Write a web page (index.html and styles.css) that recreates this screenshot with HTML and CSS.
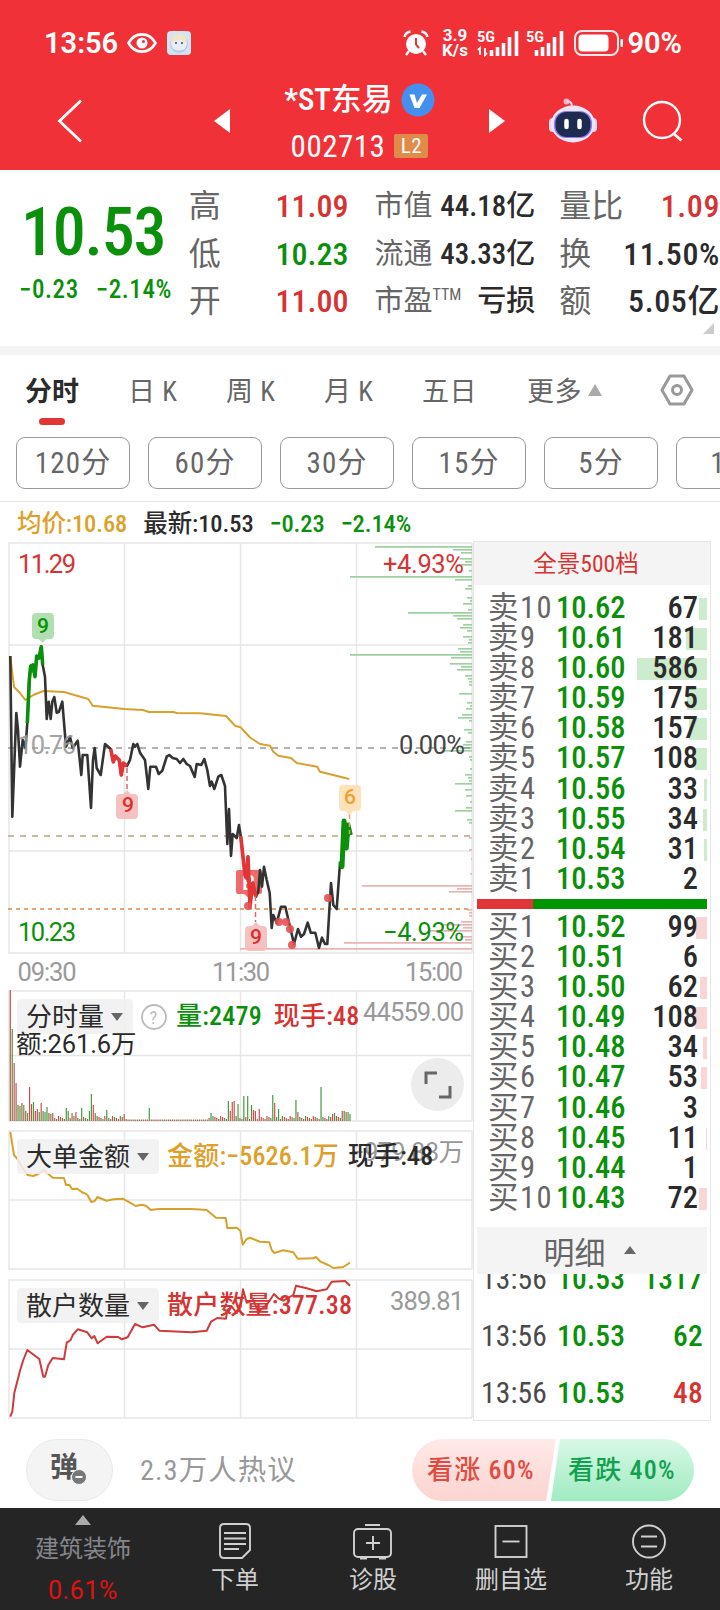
FILE: index.html
```html
<!DOCTYPE html>
<html lang="zh-CN">
<head>
  <meta charset="UTF-8" />
  <meta name="viewport" content="width=device-width, initial-scale=1.0"/>
  <title>*ST东易 002713</title>
  <link rel="stylesheet" href="styles.css">
</head>
<body>

  <header class="header">
    <div class="status">
      <span class="clock">13:56</span>
      <svg class="eye" width="30" height="20" viewBox="0 0 30 20">
        <path d="M1.500 10C8-1.500 22-1.500 28.500 10 22 21.500 8 21.500 1.500 10Z" fill="none" stroke="#fff" stroke-width="2.600"/>
        <circle cx="15" cy="10" r="5.500" fill="#fff"/>
        <circle cx="16.500" cy="8.500" r="1.500" fill="#f13138"/>
      </svg>
      <svg class="app" width="24" height="24" viewBox="0 0 24 24">
        <rect width="24" height="24" rx="4" fill="#d5e4f3"/>
        <circle cx="12" cy="13" r="9" fill="#b9cbe6"/>
        <path d="M4 11a8 8 0 0 1 16 0v3H4z" fill="#efe6c4"/>
        <ellipse cx="12" cy="14" rx="7.500" ry="5.500" fill="#e6edf6"/>
        <circle cx="9" cy="12" r="1" fill="#445"/><circle cx="15" cy="12" r="1" fill="#445"/>
      </svg>
      <div class="status-right">
        <svg width="26" height="26" viewBox="0 0 26 26">
          <circle cx="13" cy="14" r="10" fill="#fff"/>
          <path d="M1.500 7a7 7 0 0 1 6-5.500M24.500 7a7 7 0 0 0-6-5.500M6 21l-3 4M20 21l3 4" fill="none" stroke="#fff" stroke-width="2.400"/>
          <path d="M13 8v6.500l3 3.500" fill="none" stroke="#f13138" stroke-width="2"/>
        </svg>
        <div class="speed">3.9<br>K/s</div>
        <svg class="signal" width="42" height="26" viewBox="0 0 42 26">
          <text x="0" y="12" textLength="18" lengthAdjust="spacingAndGlyphs">5G</text>
          <path d="M1 20l2-2v7M8 18v7l2-2" fill="none" stroke="#fff" stroke-width="1.800"/>
          <path d="M14.500 26v-6M20.500 26v-9M26.500 26V13M32.500 26V7M39.500 26V1" stroke="#fff" stroke-width="3.600"/>
        </svg>
        <svg class="signal second" width="38" height="26" viewBox="0 0 38 26">
          <text x="0" y="12" textLength="18" lengthAdjust="spacingAndGlyphs">5G</text>
          <path d="M10.500 26v-6M16.500 26v-9M22.500 26V13M28.500 26V7M35.500 26V1" stroke="#fff" stroke-width="3.600"/>
        </svg>
        <svg class="battery" width="50" height="26" viewBox="0 0 50 26">
          <rect x="1" y="1" width="43" height="24" rx="7" fill="none" stroke="#fff" stroke-width="2" opacity=".9"/>
          <rect x="4.500" y="4.500" width="30" height="17" rx="4" fill="#fff"/>
          <rect x="46.500" y="9" width="2.500" height="8" rx="1" fill="#fff"/>
        </svg>
        <span class="percent">90%</span>
      </div>
    </div>

    <div class="titlebar">
      <svg class="back" width="28" height="44" viewBox="0 0 28 44"><path d="M25 1.500L3.500 22 25 42.500" fill="none" stroke="#fff" stroke-width="2.800"/></svg>
      <svg class="prev" width="16" height="24" viewBox="0 0 16 24"><path d="M0 12L16 0v24z" fill="#fff"/></svg>
      <div class="stock">
        <div class="name">*ST东易
          <svg width="34" height="34" viewBox="0 0 34 34"><circle cx="17" cy="17" r="16.500" fill="#4590ee"/><path d="M8.500 11.500h5l2.500 8.500 5-8.500h5L18.500 25h-5z" fill="#fff"/></svg>
        </div>
        <div class="code">002713 <span class="level">L2</span></div>
      </div>
      <svg class="next" width="16" height="24" viewBox="0 0 16 24"><path d="M16 12L0 0v24z" fill="#fff"/></svg>
      <svg class="robot" width="50" height="46" viewBox="0 0 50 46">
        <circle cx="18.500" cy="3.500" r="3" fill="#f7b5c4"/>
        <path d="M19 3q5 0 5 6" fill="none" stroke="#f4dff0" stroke-width="2"/>
        <rect x="1" y="20" width="8" height="14" rx="4" fill="#e4d9f8"/>
        <rect x="41" y="20" width="8" height="14" rx="4" fill="#e4d9f8"/>
        <ellipse cx="25" cy="26" rx="22" ry="18.500" fill="#ece6fb"/>
        <rect x="6" y="13" width="38" height="27" rx="12" fill="#8e7cf0"/>
        <rect x="7.500" y="14" width="35" height="25" rx="11" fill="#1d2b50"/>
        <path d="M18.500 23v6M31.500 23v6" stroke="#fff" stroke-width="4.500" stroke-linecap="round"/>
      </svg>
      <svg class="search" width="42" height="42" viewBox="0 0 42 42"><circle cx="20" cy="20" r="18" fill="none" stroke="#fff" stroke-width="2.400"/><path d="M31.500 33.500l8 7" stroke="#fff" stroke-width="2.800"/></svg>
    </div>
  </header>

  <section class="quote">
    <div class="last">
      <div class="price green">10.53</div>
      <div class="change green"><span>−0.23</span><span>−2.14%</span></div>
    </div>
    <div class="facts first">
      <div class="fact"><label>高</label><b class="red">11.09</b></div>
      <div class="fact"><label>低</label><b class="green">10.23</b></div>
      <div class="fact"><label>开</label><b class="red">11.00</b></div>
    </div>
    <div class="facts market">
      <div class="fact"><label>市值</label><b>44.18亿</b></div>
      <div class="fact"><label>流通</label><b>43.33亿</b></div>
      <div class="fact"><label>市盈<sup>TTM</sup></label><b>亏损</b></div>
    </div>
    <div class="facts turnover">
      <div class="fact"><label>量比</label><b class="red">1.09</b></div>
      <div class="fact"><label>换</label><b>11.50%</b></div>
      <div class="fact"><label>额</label><b>5.05亿</b></div>
    </div>
    <svg class="corner" width="11" height="11" viewBox="0 0 11 11"><path d="M11 0v11H0z" fill="#ccc"/></svg>
  </section>

  <nav class="tabs">
    <span class="tab active">分时</span>
    <span class="tab">日 K</span>
    <span class="tab">周 K</span>
    <span class="tab">月 K</span>
    <span class="tab">五日</span>
    <span class="tab more">更多<i class="up"></i></span>
    <svg class="settings" width="34" height="32" viewBox="0 0 34 32"><path d="M10 2h14l8 14-8 14H10L2 16z" fill="none" stroke="#999" stroke-width="3" stroke-linejoin="round"/><circle cx="17" cy="16" r="4.500" fill="none" stroke="#999" stroke-width="3"/></svg>
  </nav>

  <div class="periods">
    <span>120分</span>
    <span>60分</span>
    <span>30分</span>
    <span>15分</span>
    <span>5分</span>
    <span>1分</span>
  </div>

  <div class="summary">
    <span class="gold">均价:10.68</span>
    <span>最新:10.53</span>
    <span class="green">−0.23</span>
    <span class="green">−2.14%</span>
  </div>

  <main class="main">
    <div class="charts">
      <!-- price, 11.29 to 10.23 -->
      <svg width="473" height="448" viewBox="0 541 473 448">
        <path class="grid" d="M8.500 543H472M8.500 645H472M8.500 851H472M8.500 953H472M9 543V953M124.500 543V953M240.500 543V953M356.500 543V953M472 543V953"/>
        <g id="depth"></g>
        <path class="dash" d="M8 748H471" stroke="#999" stroke-dasharray="6 6"/>
        <path class="dash" d="M8 836H471" stroke="#b9a67c" stroke-dasharray="6 6"/>
        <path class="dash" d="M8 909H471" stroke="#dd8a45" stroke-dasharray="4 4"/>
        <polyline class="avg" points="10.300,656 14,687 20,693 25.300,700 33.300,695 43.300,691 64,692 88.300,699 92.700,705.700 124.300,709 143,710 149,712 173.300,712 176.700,713 200,713.300 226,716 235.300,726 240.700,727.300 250,737.500 260,744 270,745.700 273.300,751.700 278.300,755.700 291,758 296.700,763 317.300,766.700 320,771.700 349.300,779"/>
        <path fill="#ea3b3b" opacity=".75" d="M238 870h22q2 0 2 2v20q0 2-2 2h-5l-5 5-6-5h-6q-2 0-2-2v-20q0-2 2-2z"/>
        <text x="242" y="890" class="flag" fill="#fff">B</text>
        <polyline class="price-line" points="10.300,656 12.300,816.700 16.300,713 18,730 20,766.700 22.700,740 25.500,748 27.300,723 29.300,680 30.700,666 32.700,665 35,676.700 36.700,656 39,658 41.300,646.700 42.700,665 45,676.700 46.700,719 48.700,701.700 50.700,719 52.300,701.700 54.300,697 56.700,712.700 59,711.700 62.300,701.700 66,746.700 70,736.700 72.700,748 77.700,740.700 81.300,775 82.700,755 87.300,755 91,808 93,760 94.700,748 96.700,768 100.700,775 105,744 110.700,749 113.300,762 115.300,756 119.300,760 121.300,775 123.300,763 127,766 130,760 133.300,744 135,746.700 137.300,744 140,752.700 145,760 148.300,789 150.300,766.700 156,766.700 158.700,774 162.300,770.700 166.700,756.700 169.300,755 172.700,758 176.700,759 180,763 183.300,759 186.700,764 190,766 194.700,777 196.700,764 201.300,765 204.300,759 207.300,770 210,786 211.700,781.700 214.300,789 218.300,776.700 221.300,775 225,786 227.300,844 229,809 231,856 232.700,834 236.700,838 239,825 240.700,836 245,875 246.300,878 248,856.700 250,906.700 252.700,883 256,896.700 258.300,891.700 260,870 262,886.700 264,866.700 266.700,880 269.700,893 271.700,928 273.300,915 276.700,923 281,906.700 285.300,906.700 290,926.700 294,944 298,929 301,936.700 304,934 307.700,922.700 310.700,932.700 315.300,932.700 319,948 322,937.700 325,944 327.300,944 331,883 333.300,905 336.700,909 340,863 342,866.700 344,821 346.300,848 348,825 350.300,835"/>
        <polyline class="price-line up-run" points="27.300,723 29.300,680 30.700,666 32.700,665 35,676.700 36.700,656 39,658 41.300,646.700 42.700,665"/>
        <polyline class="price-line down-run" points="110.700,749 113.300,762 115.300,756 119.300,760 121.300,775 123.300,763 127,766"/>
        <polyline class="price-line down-run" points="240.700,836 245,875 246.300,878 248,856.700 250,906.700 252.700,883 256,896.700"/>
        <polyline class="price-line up-run wide" points="341,861 342,866.700 344,821 346.300,848 348,825 350.300,835"/>
        <g fill="#e65050" opacity=".9">
          <circle cx="248" cy="906" r="4"/><circle cx="279" cy="922" r="4"/><circle cx="286" cy="922" r="4"/>
          <circle cx="290" cy="929" r="4"/><circle cx="292" cy="945" r="4"/><circle cx="328" cy="898" r="4"/>
        </g>
        <path d="M127 768v22M255.500 896v26" stroke="#d66" stroke-width="1.500" stroke-dasharray="5 3"/>
        <path d="M349.500 814v20" stroke="#dca85f" stroke-width="1.500" stroke-dasharray="5 3"/>
        <path fill="#a9dcaa" opacity=".9" d="M36 613h14q4 0 4 4v18q0 4-4 4h-3.500l-4 4-4-4H36q-4 0-4-4v-18q0-4 4-4z"/>
        <path fill="#f5baba" opacity=".9" d="M120 794h3l4-4 4 4h3q4 0 4 4v17q0 4-4 4h-14q-4 0-4-4v-17q0-4 4-4z"/>
        <path fill="#f5baba" opacity=".9" d="M249 926h3l4-4 4 4h3q4 0 4 4v17q0 4-4 4h-14q-4 0-4-4v-17q0-4 4-4z"/>
        <path fill="#fddfb2" opacity=".9" d="M343 785h14q4 0 4 4v18q0 4-4 4h-3.500l-4 4-4-4H343q-4 0-4-4v-18q0-4 4-4z"/>
        <text class="flag" x="37" y="633" fill="#009600">9</text>
        <text class="flag" x="122" y="812" fill="#da2e2e">9</text>
        <text class="flag" x="250" y="944" fill="#da2e2e">9</text>
        <text class="flag" x="344" y="804" fill="#eea132">6</text>
        <text class="axis red" x="18" y="573" textLength="58">11.29</text>
        <text class="axis gray" x="18" y="754" textLength="58" opacity=".9">10.76</text>
        <text class="axis green" x="18" y="941" textLength="58">10.23</text>
        <text class="axis red" x="383" y="573" textLength="81">+4.93%</text>
        <text class="axis dark" x="399" y="754" textLength="66">0.00%</text>
        <text class="axis green" x="383" y="941" textLength="81">−4.93%</text>
        <text class="axis gray" x="17.500" y="981" textLength="59">09:30</text>
        <text class="axis gray" x="212" y="981" textLength="58">11:30</text>
        <text class="axis gray" x="405" y="981" textLength="58">15:00</text>
      </svg>

      <!-- minute volume -->
      <div class="panel volume">
        <svg width="473" height="132" viewBox="0 990 473 132">
          <path class="grid" d="M8.500 991H472M8.500 1055.500H472M8.500 1121H472M9 991V1121M124.500 991V1121M240.500 991V1121M356.500 991V1121M472 991V1121"/>
          <g id="volume"></g>
          <text class="axis gray" x="363" y="1021" textLength="101">44559.00</text>
        </svg>
        <div class="legend">
          <span class="pick">分时量<i class="down"></i></span>
          <svg width="26" height="26" viewBox="0 0 26 26"><circle cx="13" cy="13" r="12" fill="none" stroke="#bbb" stroke-width="1.800"/><text x="8.500" y="19.500" font-size="18" fill="#bbb">?</text></svg>
          <span class="value green">量:2479</span>
          <span class="value red now">现手:48</span>
        </div>
        <div class="amount">额:261.6万</div>
        <div class="expand"><svg width="28" height="28" viewBox="0 0 28 28"><path d="M2 13V2h11M26 15v11H15" fill="none" stroke="#666" stroke-width="3"/></svg></div>
      </div>

      <!-- big orders -->
      <div class="panel orders">
        <svg width="473" height="140" viewBox="0 1130 473 140">
          <path class="grid" d="M8.500 1131H472M8.500 1200H472M8.500 1269H472M9 1131V1269M124.500 1131V1269M240.500 1131V1269M356.500 1131V1269M472 1131V1269"/>
          <text class="axis gray" x="350" y="1161" textLength="114">−979.88万</text>
          <polyline class="avg" points="10.300,1132 14,1155 16.700,1158 22.700,1168 27.700,1175 33.300,1176 38.300,1174 44,1170 52.700,1177.700 64,1178 66,1185 69.300,1184.700 72,1189 77.300,1188.700 81.700,1192 87.300,1194.700 91.300,1202 94.700,1201 97.300,1197 106.700,1200.700 113.300,1199.300 122.700,1198.700 130,1202.700 135.700,1206 141.700,1204.700 146,1205.700 150.700,1210 158.300,1209 191.700,1209 206.700,1210 216,1217.700 225.700,1218 227.300,1228 236.700,1227.700 240.300,1230.700 242.700,1244.700 246.700,1239 250,1237.700 260,1241.700 269.300,1242.300 271.700,1250 274.300,1253 283.300,1250.300 293.300,1252.300 297.700,1258.700 313.300,1258.300 316,1257 320,1261.300 328.300,1265 333.300,1268 343.300,1267 350,1262.700"/>
        </svg>
        <div class="legend">
          <span class="pick">大单金额<i class="down"></i></span>
          <span class="value gold">金额:−5626.1万</span>
          <span class="value">现手:48</span>
        </div>
      </div>

      <!-- retail holders -->
      <div class="panel retail">
        <svg width="473" height="140" viewBox="0 1279 473 140">
          <path class="grid" d="M8.500 1280H472M8.500 1349H472M8.500 1418H472M9 1280V1418M124.500 1280V1418M240.500 1280V1418M356.500 1280V1418M472 1280V1418"/>
          <text class="axis gray" x="390" y="1310" textLength="74">389.81</text>
          <polyline class="holders" points="10.300,1416.700 12.300,1411.700 14.300,1393 20,1370.700 23.300,1360 27.300,1350 39.300,1359 43.300,1376.700 45,1376.700 48.300,1365 52.700,1358 64,1359.300 66.700,1342.700 70.700,1340 72.700,1335 77.700,1329.300 87.300,1332.300 91.700,1338.300 94.300,1336 97.700,1343.300 106.700,1336.700 118.300,1337 121.700,1339.300 127.700,1337.300 135,1324 142.700,1327.300 154,1324.700 159.300,1330.700 191.700,1332.300 206.700,1330.700 211,1321.700 217.300,1318 226,1318.700 227.300,1310 231.700,1306.700 236.700,1313 240.700,1306.700 243,1289.300 246.700,1302.700 253.300,1300 258.300,1311.700 266.700,1305 274,1294 278.300,1298.300 283.300,1300.700 293.300,1295 296,1285.700 306.700,1288.300 316.700,1291.300 326.700,1289.300 331.700,1281.700 345,1281 350,1285.700"/>
        </svg>
        <div class="legend">
          <span class="pick">散户数量<i class="down"></i></span>
          <span class="value red">散户数量:377.38</span>
        </div>
      </div>
    </div>

    <aside class="book">
      <div class="book-head">全景500档</div>
      <div class="sells" id="sells"></div>
      <div class="ratio"><i></i></div>
      <div class="buys" id="buys"></div>
      <div class="detail-head">明细<i class="up"></i></div>
      <div class="trades">
        <div class="trade"><span>13:56</span><b>10.53</b><em class="green">1317</em></div>
        <div class="trade"><span>13:56</span><b>10.53</b><em class="green">62</em></div>
        <div class="trade"><span>13:56</span><b>10.53</b><em class="red">48</em></div>
      </div>
    </aside>
  </main>

  <div class="talk">
    <div class="bullet">弹<svg width="16" height="16" viewBox="0 0 16 16"><circle cx="8" cy="8" r="7.500" fill="#777" stroke="#f4f4f4"/><path d="M4.500 8h7" stroke="#fff" stroke-width="2"/></svg></div>
    <span class="hot">2.3万人热议</span>
    <div class="vote">
      <span class="rise">看涨 60%</span>
      <span class="fall">看跌 40%</span>
    </div>
  </div>

  <footer class="bottom">
    <div class="sector"><i class="up"></i><span>建筑装饰</span><b>0.61%</b></div>
    <div class="item">
      <svg width="34" height="38" viewBox="0 0 34 38"><path d="M6 2h22q4 0 4 4v22l-8 8H6q-4 0-4-4V6q0-4 4-4z"/><path d="M6 11h22M6 16.500h22M6 22h22M6 27h15"/></svg>
      下单
    </div>
    <div class="item">
      <svg width="40" height="38" viewBox="0 0 40 38"><rect x="1" y="7" width="37" height="28" rx="4"/><path d="M12 3h15M20 14v14M13 21h14M7 36.500h7M26 36.500h7"/></svg>
      诊股
    </div>
    <div class="item">
      <svg width="34" height="38" viewBox="0 0 34 38"><rect x="1.500" y="4" width="31" height="31"/><path d="M8.500 19.500h17"/></svg>
      删自选
    </div>
    <div class="item">
      <svg width="36" height="38" viewBox="0 0 36 38"><circle cx="18" cy="19.500" r="16"/><path d="M10 14.500h16M10 24.500h16"/></svg>
      功能
    </div>
  </footer>

  <script src="script.js"></script>
</body>
</html>
```
FILE: styles.css
```css
* {
  box-sizing: border-box;
}

body {
  margin: 0;
  width: 720px;
  height: 1610px;
  overflow: hidden;
  background: #fff;
  color: #2b2b2b;
  font-family: Roboto, "Noto Sans CJK SC", sans-serif;
  font-stretch: 87%;
}

b {
  font-weight: 500;
}

i, em {
  font-style: normal;
}

svg {
  display: block;
  flex: none;
  overflow: visible;
}

.red { color: #d63333; }
.green { color: #0a900a; }
.gold { color: #dea02a; }

.up, .down {
  display: inline-block;
  border: 7px solid transparent;
  border-top: 0;
  border-bottom: 12px solid #aaa;
}

.down {
  border-top: 8px solid #666;
  border-bottom: 0;
}

/* header */
.header {
  height: 170px;
  background: #f13138;
  color: #fff;
}

.status {
  height: 72px;
  padding: 13px 38px 0 44px;
  display: flex;
  align-items: center;
}

.clock, .percent {
  font-size: 29px;
  font-weight: 600;
  font-stretch: 97%;
  line-height: 30px;
}

.clock {
  width: 83px;
}

.app {
  margin-left: 10px;
}

.status-right {
  margin-left: auto;
  display: flex;
  align-items: center;
}

.speed {
  width: 27px;
  margin: 0 9px 0 12px;
  font-size: 17px;
  line-height: 15px;
  font-weight: 700;
  font-stretch: 100%;
  text-align: center;
}

.signal text {
  font-size: 15px;
  font-weight: 600;
  fill: #fff;
}

.second {
  margin-left: 7px;
}

.battery {
  margin: 0 3px 0 10px;
}

.titlebar {
  height: 98px;
  padding: 0 36px 0 56px;
  display: flex;
  align-items: center;
}

.prev {
  margin-left: 130px;
}

.stock {
  width: 260px;
  align-self: flex-start;
  padding-top: 8px;
}

.name {
  height: 42px;
  display: flex;
  justify-content: center;
  align-items: center;
  gap: 8px;
  font-size: 31px;
  line-height: 38px;
  padding-bottom: 2px;
  font-weight: 500;
}

.code {
  height: 44px;
  margin-top: 2px;
  display: flex;
  justify-content: center;
  align-items: center;
  gap: 9px;
  font-size: 31px;
  letter-spacing: .5px;
}

.level {
  width: 34px;
  background: #e08b49;
  border-radius: 2px;
  font-size: 21px;
  line-height: 24px;
  text-align: center;
}

.robot {
  margin-left: 43px;
}

.search {
  margin-left: 44px;
}

/* quote */
.quote {
  position: relative;
  height: 185px;
  padding-top: 13px;
  border-bottom: 9px solid #f4f4f4;
  display: flex;
}

.last {
  width: 189px;
}

.price {
  padding-left: 21px;
  margin-top: 17px;
  font-size: 66px;
  line-height: 66px;
  font-weight: 500;
  letter-spacing: -1.200px;
}

.change {
  display: flex;
  gap: 17px;
  padding-left: 19px;
  margin-top: 9px;
  font-size: 25px;
  line-height: 30px;
  font-weight: 500;
  letter-spacing: .6px;
}

.fact {
  height: 47.500px;
  display: flex;
  justify-content: space-between;
  font-size: 32px;
  line-height: 47px;
  white-space: nowrap;
}

.fact label {
  color: #666;
}

.first {
  width: 160px;
}

.market {
  width: 161px;
  margin-left: 26px;
}

.market .fact {
  font-size: 29px;
}

.market sup {
  font-size: 16px;
  line-height: 0;
}

.turnover {
  width: 161px;
  margin-left: 24px;
}

.turnover b {
  letter-spacing: .6px;
}

.corner {
  position: absolute;
  right: 6px;
  bottom: 12px;
}

/* tabs */
.tabs {
  height: 82px;
  padding: 0 26px 13px 25px;
  display: flex;
  align-items: center;
  font-size: 27px;
  color: #666;
}

.tab {
  width: 98px;
  letter-spacing: .5px;
}

.tab.active {
  position: relative;
  width: 103px;
  color: #2b2b2b;
  font-weight: 700;
  letter-spacing: 0;
}

.tab.active::after {
  content: "";
  position: absolute;
  left: 14px;
  bottom: -16px;
  width: 26px;
  height: 7px;
  border-radius: 4px;
  background: #e33535;
}

.tab.more {
  width: 80px;
  margin-left: 7px;
  display: flex;
  align-items: center;
  gap: 6px;
}

.settings {
  margin-left: auto;
}

.periods {
  height: 65px;
  padding-left: 16px;
  border-bottom: 1px solid #e4e4e4;
  display: flex;
  gap: 18px;
  overflow: hidden;
}

.periods span {
  flex: none;
  width: 114px;
  height: 52px;
  border: 1px solid #999;
  border-radius: 9px;
  text-align: center;
  font-size: 29px;
  letter-spacing: 1.200px;
  line-height: 50px;
  color: #666;
}

.summary {
  height: 39px;
  padding: 4px 0 0 17px;
  display: flex;
  gap: 16px;
  font-size: 24.500px;
  line-height: 35px;
  font-weight: 500;
  letter-spacing: -.1px;
}

/* charts */
.main {
  height: 880px;
  display: flex;
}

.charts {
  width: 473px;
}

.grid {
  fill: none;
  stroke: #e6e6e6;
  stroke-width: 1.500;
}

.dash {
  stroke-width: 1.600;
}

.axis {
  font-size: 25.500px;
  font-stretch: 92%;
}

.axis.red { fill: #d63333; }
.axis.green { fill: #0a900a; }
.axis.gray { fill: #999; }
.axis.dark { fill: #444; }

.avg, .holders, .price-line {
  fill: none;
  stroke: #d9a02c;
  stroke-width: 2;
  stroke-linejoin: round;
}

.holders {
  stroke: #d03a3a;
}

.price-line {
  stroke: #333;
  stroke-width: 2.600;
}

.up-run {
  stroke: #0a900a;
  stroke-width: 3.600;
}

.wide {
  stroke-width: 5;
}

.down-run {
  stroke: #e33535;
  stroke-width: 3.600;
}

.flag {
  font-size: 21px;
  font-weight: 500;
  font-stretch: 100%;
}

.panel {
  position: relative;
  height: 132px;
  margin-bottom: 9px;
}

.orders, .retail {
  height: 140px;
}

.volume {
  margin-top: 1px;
  margin-bottom: 8px;
}

.legend {
  position: absolute;
  left: 17px;
  top: 9px;
  display: flex;
  align-items: center;
  gap: 9px;
  height: 35px;
  font-size: 26px;
  white-space: nowrap;
}

.pick {
  height: 35px;
  padding: 0 10px 0 9px;
  border-radius: 4px;
  background: rgba(240, 240, 240, .85);
  line-height: 36px;
  margin-right: -1px;
}

.pick .down {
  margin-left: 7px;
  border-left-width: 6px;
  border-right-width: 6px;
  vertical-align: 5px;
}

.value {
  height: 35px;
  line-height: 35px;
  font-weight: 500;
  letter-spacing: .2px;
}

.now {
  margin-left: 3px;
}

.amount {
  position: absolute;
  left: 16px;
  top: 36px;
  font-size: 25.500px;
  line-height: 36px;
  font-stretch: 92%;
  letter-spacing: -.1px;
}

.expand {
  position: absolute;
  left: 411px;
  top: 68px;
  width: 53px;
  height: 53px;
  border-radius: 50%;
  background: #ececec;
  display: flex;
  align-items: center;
  justify-content: center;
}

/* order book */
.book {
  width: 238px;
  height: 880px;
  border: 1px solid #e6e6e6;
  overflow: hidden;
}

.book-head {
  height: 43px;
  padding-right: 12px;
  background: #f4f4f4;
  color: #d63333;
  text-align: center;
  font-size: 23.500px;
  line-height: 44px;
}

.sells, .buys {
  padding: 8px 3px 0;
}

.buys {
  padding-top: 3px;
}

.level-row {
  position: relative;
  height: 30.100px;
  padding-left: 11px;
  display: flex;
  font-size: 30.500px;
  line-height: 30px;
  white-space: nowrap;
}

.level-row span {
  width: 68px;
  color: #666;
  letter-spacing: 1.500px;
}

.level-row b {
  color: #0a900a;
}

.level-row em {
  position: absolute;
  right: 9px;
  font-weight: 500;
}

.level-row i {
  position: absolute;
  right: 0;
  top: 5px;
  height: 22px;
  background: #cdebcd;
}

.buys .level-row i {
  background: #fad5d5;
}

.ratio {
  height: 10px;
  margin: 5px 3px 0;
  background: #009600;
}

.ratio i {
  display: block;
  width: 56px;
  height: 10px;
  background: #e33535;
}

.detail-head {
  height: 47px;
  margin: 14px 3px 0;
  padding-right: 5px;
  background: #f4f4f4;
  color: #666;
  display: flex;
  align-items: center;
  justify-content: center;
  gap: 18px;
  font-size: 31px;
}

.detail-head .up {
  border-width: 0 6px 8px;
  border-bottom-color: #666;
}

.trades {
  height: 144px;
  overflow: hidden;
}

.trade {
  position: relative;
  top: -23px;
  height: 57px;
  padding: 0 7px 0 7px;
  display: flex;
  align-items: center;
  font-size: 29.500px;
  letter-spacing: .2px;
}

.trade span {
  width: 76px;
  color: #4a4a4a;
}

.trade b {
  color: #0a900a;
}

.trade em {
  margin-left: auto;
  font-weight: 500;
}

/* discussion */
.talk {
  height: 87px;
  padding: 18px 26px 0;
  display: flex;
}

.bullet {
  position: relative;
  width: 87px;
  height: 62px;
  border: 1px solid #eaeaea;
  border-radius: 31px;
  background: #f4f4f4;
  color: #555;
  font-size: 28px;
  font-weight: 700;
  line-height: 55px;
  padding-left: 23px;
}

.bullet svg {
  position: absolute;
  left: 44px;
  top: 29px;
}

.hot {
  margin-left: 27px;
  font-size: 28.500px;
  line-height: 63px;
  letter-spacing: 1px;
  color: #999;
}

.vote {
  margin-left: auto;
  width: 282px;
  height: 62px;
  border-radius: 31px;
  overflow: hidden;
  display: flex;
  font-size: 26px;
  font-weight: 500;
  line-height: 62px;
  letter-spacing: 1.200px;
}

.rise, .fall {
  width: 144px;
  padding-left: 15px;
  white-space: nowrap;
  color: #e34a40;
  background: linear-gradient(#feeae8, #fcd3cf);
  clip-path: polygon(0 0, 100% 0, 134px 100%, 0 100%);
}

.fall {
  width: 143px;
  margin-left: -5px;
  padding-left: 17px;
  color: #12a150;
  background: linear-gradient(#d9f8e6, #9febc0);
  clip-path: polygon(9px 0, 100% 0, 100% 100%, 0 100%);
}

/* bottom bar */
.bottom {
  height: 102px;
  background: #252525;
  color: #d0d0d0;
  display: flex;
}

.sector {
  width: 166px;
  display: flex;
  flex-direction: column;
  align-items: center;
  font-size: 24px;
  color: #85858c;
}

.sector .up {
  margin-top: 7px;
  border-width: 0 8px 10px;
}

.sector span {
  line-height: 48px;
}

.sector b {
  color: #e01212;
  font-size: 25px;
  font-weight: 400;
  font-stretch: 97%;
  letter-spacing: .6px;
  line-height: 35px;
}

.item {
  width: 138px;
  padding-top: 14px;
  display: flex;
  flex-direction: column;
  align-items: center;
  gap: 3px;
  font-size: 24px;
  line-height: 34px;
}

.item svg {
  fill: none;
  stroke: #d0d0d0;
  stroke-width: 1.900;
}
```
FILE: script.js
```js
const SVG_NS = 'http://www.w3.org/2000/svg';

// [price, volume, bar width]
const sells = [
  ['10.62', 67, 8], ['10.61', 181, 21], ['10.60', 586, 70], ['10.59', 175, 20], ['10.58', 157, 18],
  ['10.57', 108, 12], ['10.56', 33, 3], ['10.55', 34, 4], ['10.54', 31, 3], ['10.53', 2, 0]
];
const buys = [
  ['10.52', 99, 11], ['10.51', 6, 0], ['10.50', 62, 7], ['10.49', 108, 12], ['10.48', 34, 4],
  ['10.47', 53, 6], ['10.46', 3, 0], ['10.45', 11, 1], ['10.44', 1, 0], ['10.43', 72, 8]
];

function row(label, [price, vol, width]) {
  return `<div class="level-row"><i style="width:${width}px"></i><span>${label}</span><b>${price}</b><em>${vol}</em></div>`;
}

document.getElementById('sells').innerHTML = sells.map((r, i) => row('卖' + (10 - i), r)).join('');
document.getElementById('buys').innerHTML = buys.map((r, i) => row('买' + (i + 1), r)).join('');

function line(parent, x1, y1, x2, y2, color, width) {
  const el = document.createElementNS(SVG_NS, 'path');
  el.setAttribute('d', `M${x1} ${y1}L${x2} ${y2}`);
  el.setAttribute('stroke', color);
  el.setAttribute('stroke-width', width);
  parent.appendChild(el);
}

// pending orders by price, [step from the top, length], one step is 3px
const asks = [
  [0, 97], [1, 19], [2, 11], [4, 12], [5, 7], [6, 15], [8, 3], [10, 122], [11, 17], [13, 4], [14, 7],
  [17, 5], [18, 2], [19, 9], [21, 4], [22, 64], [23, 19], [24, 15], [26, 9], [27, 12], [28, 5], [30, 9],
  [31, 3], [32, 4], [34, 14], [35, 12], [36, 122], [37, 21], [39, 22], [40, 11], [41, 15], [43, 7],
  [44, 4], [45, 3], [46, 3], [49, 13], [52, 5], [53, 2], [54, 6], [56, 10], [57, 14], [58, 3], [61, 8],
  [62, 4], [65, 6], [66, 9], [67, 12], [68, 29], [70, 3], [71, 2], [74, 2], [76, 7], [77, 4], [78, 3],
  [79, 17], [81, 7], [83, 6], [85, 2], [87, 6], [88, 17], [91, 5], [92, 3]
];
const bids = [
  [97, 3], [101, 3], [104, 1], [109, 2], [113, 110], [114, 15], [115, 23], [121, 5], [122, 3], [123, 3],
  [125, 11], [126, 29], [127, 9], [128, 42], [130, 12], [131, 7], [132, 128], [134, 232]
];
const depth = document.getElementById('depth');
asks.forEach(([s, len]) => line(depth, 472 - len, 546.8 + s * 3, 472, 546.8 + s * 3, '#9fd0a0', 1.7));
bids.forEach(([s, len]) => line(depth, 472 - len, 546.8 + s * 3, 472, 546.8 + s * 3, '#eab4b4', 1.7));

// one bar per minute, tall ones listed and the rest low
const peaks = {
  0: [131, 'r'], 1: [92, 'g'], 2: [58, 'r'], 3: [38, 'r'], 4: [16, 'g'], 5: [15, 'g'], 6: [18, 'r'], 7: [16, 'g'],
  8: [10, 'r'], 9: [8, 'g'], 10: [34, 'r'], 11: [17, 'r'], 12: [19, 'g'], 13: [10, 'r'], 14: [12, 'r'], 15: [9, 'g'],
  16: [18, 'r'], 17: [10, 'g'], 18: [9, 'g'], 19: [14, 'g'], 20: [8, 'r'], 21: [7, 'g'], 22: [8, 'r'], 29: [13, 'g'],
  30: [10, 'g'], 32: [8, 'r'], 34: [9, 'r'], 37: [13, 'g'], 41: [10, 'g'], 42: [27, 'g'], 43: [16, 'r'], 44: [8, 'r'],
  50: [11, 'g'], 59: [7, 'r'], 72: [13, 'g'], 104: [8, 'g'], 113: [20, 'g'], 114: [10, 'r'], 115: [19, 'r'],
  116: [20, 'r'], 118: [17, 'g'], 121: [25, 'g'], 123: [25, 'g'], 125: [16, 'g'], 126: [11, 'r'], 127: [10, 'r'],
  129: [12, 'r'], 136: [26, 'g'], 137: [18, 'r'], 139: [12, 'g'], 148: [21, 'g'], 149: [9, 'r'], 161: [34, 'g'],
  167: [7, 'r'], 168: [8, 'g'], 172: [10, 'r'], 173: [10, 'g'], 174: [9, 'r'], 175: [9, 'g'], 176: [7, 'g']
};
const volume = document.getElementById('volume');
for (let i = 0; i < 177; i++) {
  const quiet = i > 60 && i < 103;
  const [h, c] = peaks[i] || [quiet ? 1.5 : 2 + (i * 7) % 4, i % 3 ? 'r' : 'g'];
  const x = 10.3 + i * 1.93;
  line(volume, x, 1121, x, 1121 - h, c === 'r' ? '#c9514d' : '#459a3c', 1.2);
}
```
